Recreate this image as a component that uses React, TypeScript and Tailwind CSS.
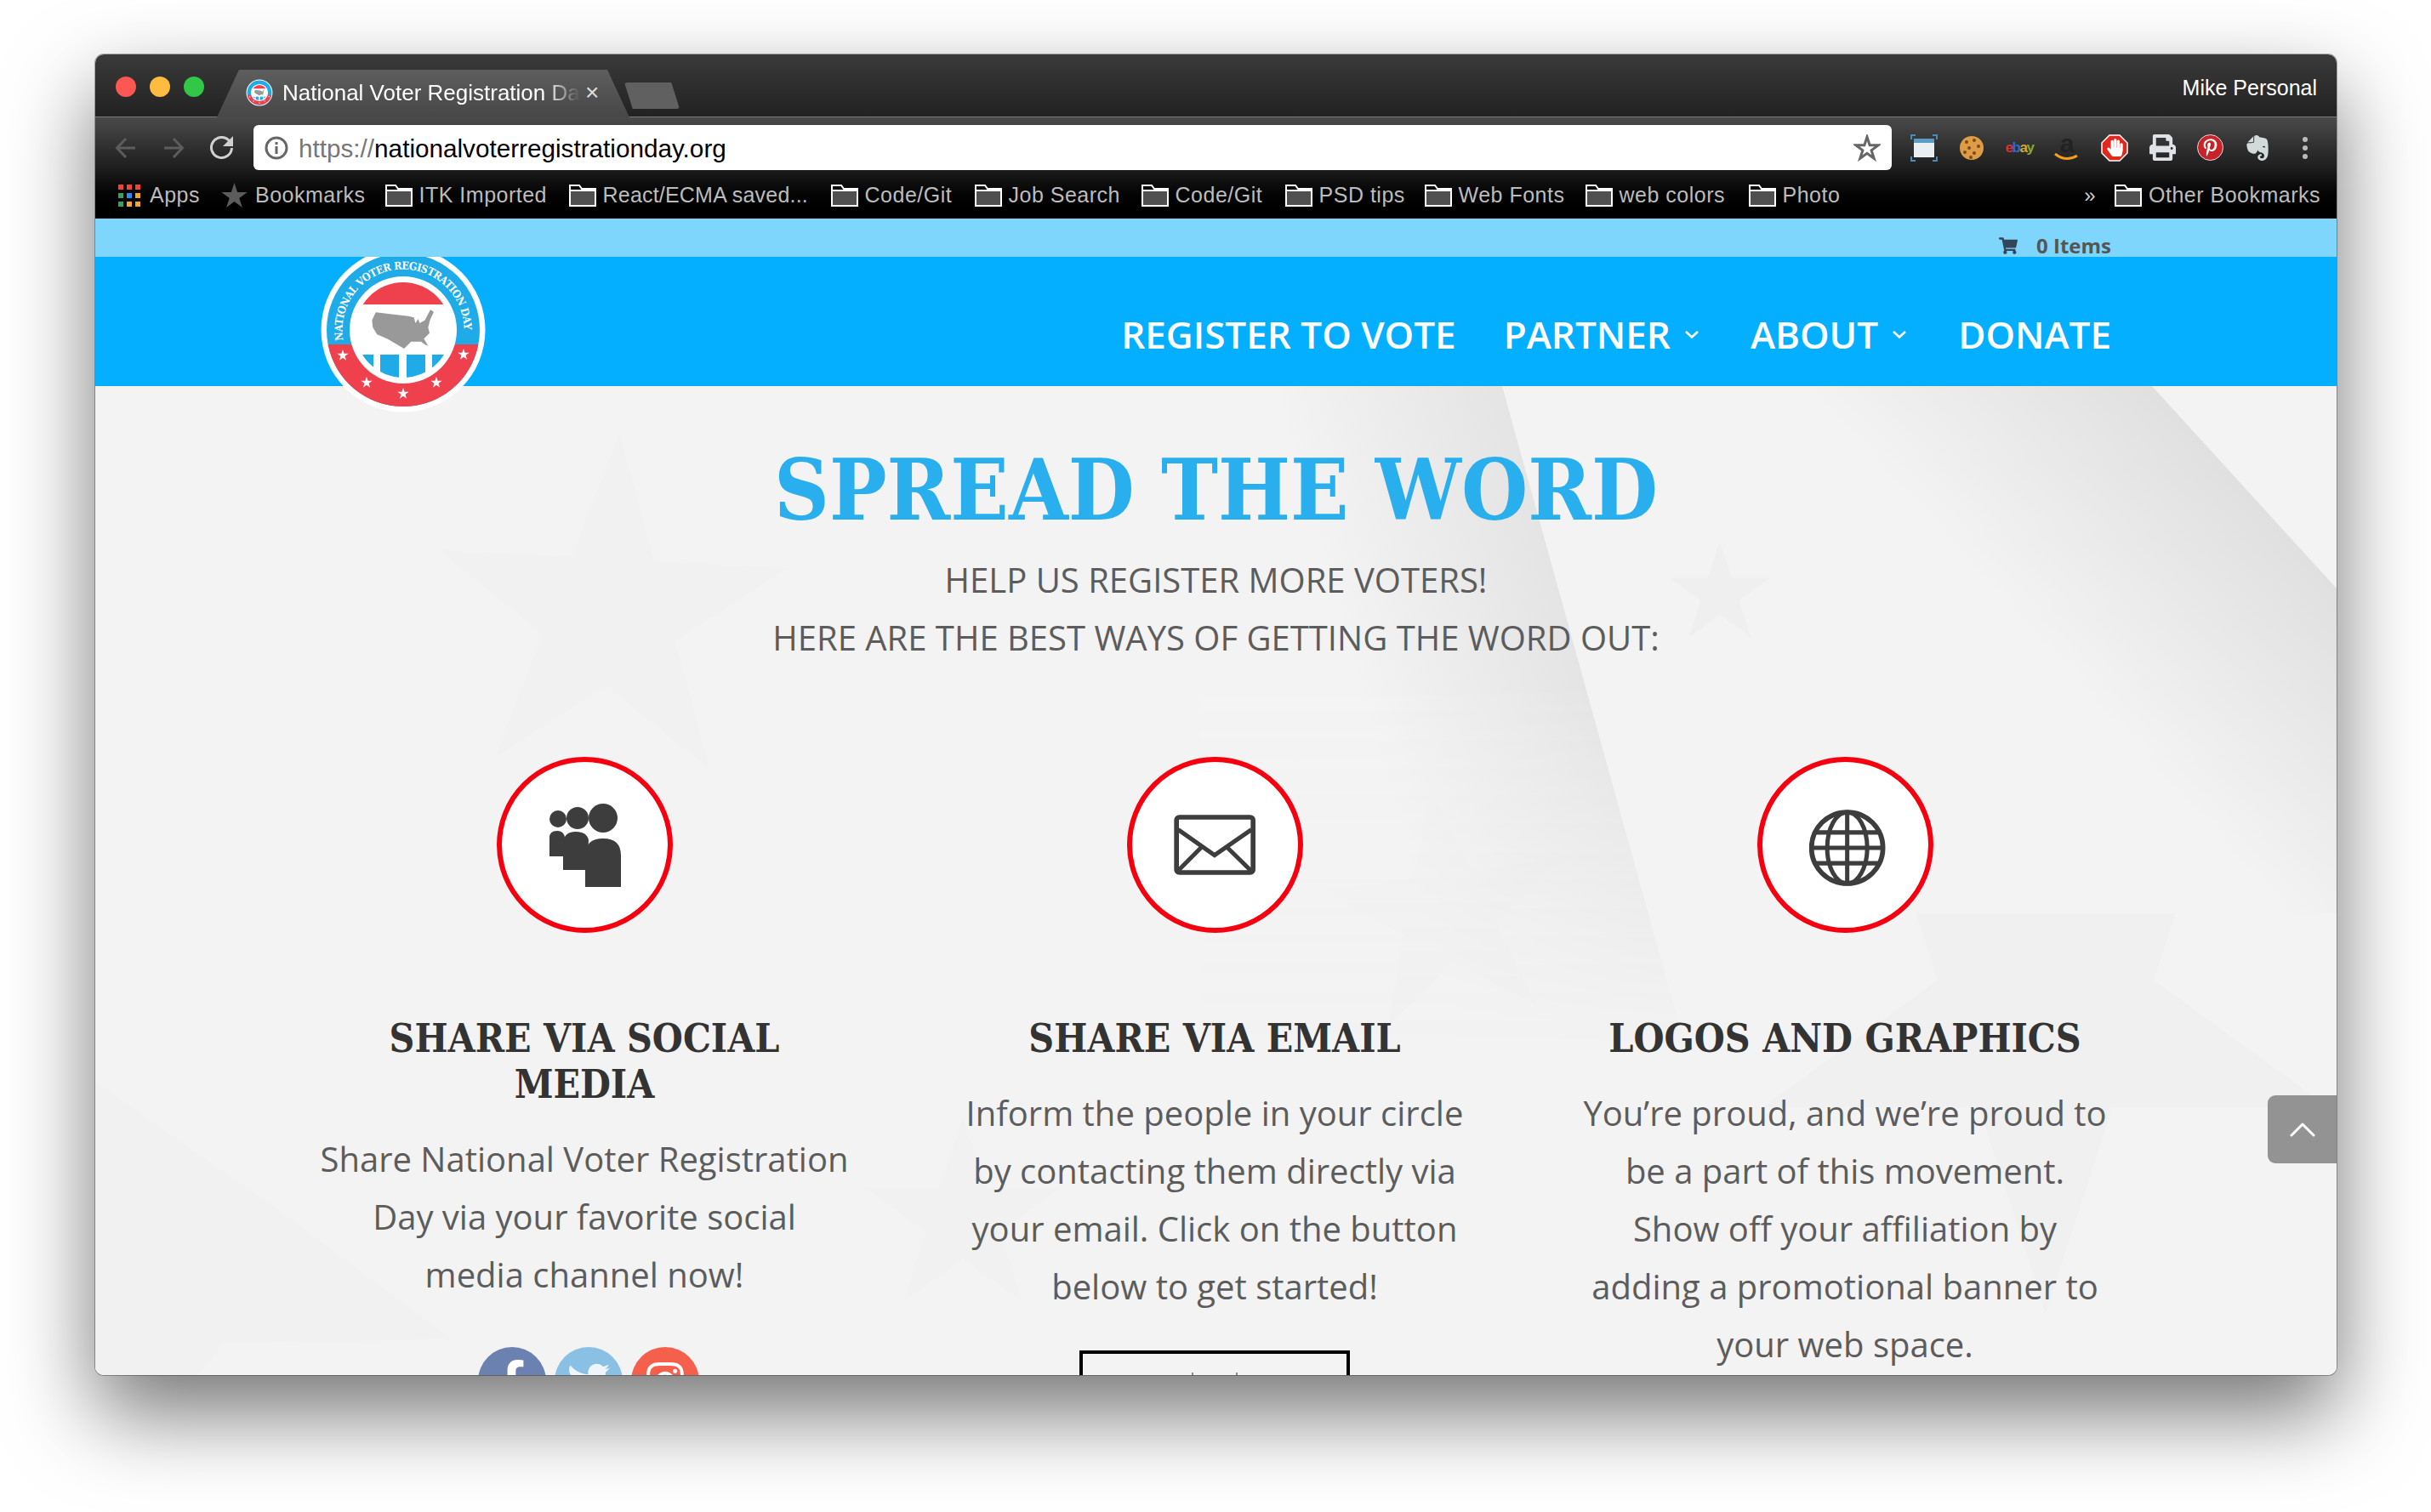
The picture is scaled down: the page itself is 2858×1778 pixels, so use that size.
import React from "react";
import { FaFacebookF, FaTwitter, FaInstagram, FaHandPaper, FaPrint, FaPinterestP, FaEvernote, FaShoppingCart } from "react-icons/fa";

const star = (cx: number, cy: number, R: number, rot = 0) => {
  const pts: string[] = [];
  for (let i = 0; i < 10; i++) {
    const r = i % 2 === 0 ? R : R * 0.382;
    const a = ((-90 + rot + i * 36) * Math.PI) / 180;
    pts.push(`${(cx + r * Math.cos(a)).toFixed(1)},${(cy + r * Math.sin(a)).toFixed(1)}`);
  }
  return pts.join(" ");
};

function Logo({ size, withText = true }: { size: number; withText?: boolean }) {
  return (
    <svg width={size} height={size} viewBox="0 0 200 200">
      <defs>
        <path id="logoArc" d="M 29.5 112 A 71.5 71.5 0 1 1 170.5 112" />
        <clipPath id="logoInner"><circle cx="100" cy="100" r="56" /></clipPath>
      </defs>
      <circle cx="100" cy="100" r="96.5" fill="#fff" />
      <circle cx="100" cy="100" r="90" fill="#1eabe8" />
      <path d="M 11.6 117 A 90 90 0 0 0 188.4 117 Z" fill="#ef404e" />
      <circle cx="100" cy="100" r="63" fill="#fff" />
      <g clipPath="url(#logoInner)">
        <rect x="40" y="40" width="120" height="30" fill="#ef404e" />
        <rect x="52" y="129" width="13" height="30" fill="#1eabe8" />
        <rect x="73" y="129" width="22" height="30" fill="#1eabe8" />
        <rect x="104" y="129" width="22" height="30" fill="#1eabe8" />
        <rect x="134" y="129" width="14" height="30" fill="#1eabe8" />
      </g>
      <g transform="translate(100,100) scale(0.3333) translate(-402,-354)">
        <polygon
          fill="#999"
          points="305,292 420,305 440,310 445,330 455,315 460,330 478,320 498,283 510,290 497,318 490,345 495,365 475,385 490,410 478,405 465,395 430,395 405,420 380,405 345,385 310,370 295,345 292,320"
        />
      </g>
      {withText && (
        <text fill="#fff" fontFamily="'DejaVu Serif', serif" fontWeight="700" fontSize="12.5" style={{ fontStretch: "condensed" }}>
          <textPath href="#logoArc" textLength="236" lengthAdjust="spacing">NATIONAL VOTER REGISTRATION DAY</textPath>
        </text>
      )}
      {[[29, 130], [57, 162], [100, 175], [139, 162], [171, 129]].map(([x, y]) => (
        <polygon key={x} points={star(x, y, 7)} fill="#fff" />
      ))}
    </svg>
  );
}

function Folder() {
  return (
    <svg width="32" height="26" viewBox="0 0 32 26" className="shrink-0">
      <path d="M1 8 H31 V25 H1 Z" fill="#505050" />
      <path d="M1 25 V1 H12 L15 5 H31 V25 Z M1 7 H31" fill="none" stroke="#fff" strokeWidth="2" />
    </svg>
  );
}

function Bm({ label, w, tight = false }: { label: string; w: number; tight?: boolean }) {
  return (
    <div className="flex items-center gap-[8px]">
      <Folder />
      <span className={tight ? "whitespace-nowrap tracking-[0.2px]" : "whitespace-nowrap"} style={{ width: w }}>{label}</span>
    </div>
  );
}

function AppsGrid() {
  const c = ["#f44336", "#f44336", "#f44336", "#3c9d60", "#2b8cf5", "#f5a52a", "#3c9d60", "#f5a52a", "#f5a52a"];
  return (
    <div className="grid grid-cols-3 gap-[4px] w-[26px] shrink-0">
      {c.map((x, i) => (
        <div key={i} className="w-[6px] h-[6px]" style={{ background: x }} />
      ))}
    </div>
  );
}

function Ext({ children }: { children: React.ReactNode }) {
  return <div className="w-[56px] h-[40px] flex items-center justify-center shrink-0">{children}</div>;
}

function Chev() {
  return (
    <svg width="18" height="11" viewBox="0 0 18 11" className="ml-[16px] mt-[2px]">
      <path d="M2 2 L9 8.5 L16 2" fill="none" stroke="#fff" strokeWidth="2.6" />
    </svg>
  );
}

function Circle({ children }: { children: React.ReactNode }) {
  return (
    <div className="w-[207px] h-[207px] rounded-full bg-white border-[6px] border-[#f5000f] flex items-center justify-center">
      {children}
    </div>
  );
}

const heading = "text-[46px] leading-[54px] font-bold text-[#333] text-center [font-family:'DejaVu_Serif',serif] [font-stretch:condensed]";
const body = "mt-[27px] text-[40px] leading-[68px] text-[#5c5c5c] text-center [font-family:'Open_Sans',sans-serif]";

function PageBackground() {
  return (
    <svg className="absolute inset-0 w-full h-full" viewBox="0 0 2635 1163" preserveAspectRatio="none">
      <defs>
        <linearGradient id="band" gradientUnits="userSpaceOnUse" x1="1760" y1="370" x2="1510" y2="440">
          <stop offset="0" stopColor="#e4e4e4" />
          <stop offset="1" stopColor="#f3f3f3" />
        </linearGradient>
        <linearGradient id="corner" gradientUnits="userSpaceOnUse" x1="2526" y1="119" x2="2304" y2="321">
          <stop offset="0" stopColor="#e0e0e0" />
          <stop offset="1" stopColor="#f3f3f3" />
        </linearGradient>
        <linearGradient id="fadeDown" x1="0" y1="0" x2="0" y2="1">
          <stop offset="0.45" stopColor="#fff" />
          <stop offset="1" stopColor="#000" />
        </linearGradient>
        <mask id="bandMask"><rect x="1300" y="0" width="800" height="780" fill="url(#fadeDown)" /></mask>
      </defs>
      <polygon points={star(605, 270, 215, 3)} fill="#f1f1f1" />
      <polygon points={star(2293, 740, 350, 180)} fill="#f0f0f0" />
      <polygon points={star(1590, 620, 150, -8)} fill="#f1f1f1" />
      <polygon points="1300,0 1654,0 1870,780 1300,780" fill="url(#band)" mask="url(#bandMask)" />
      <polygon points="2418,0 2635,238 2635,620 2000,620 2000,0" fill="url(#corner)" />
      <polygon points={star(1910, 245, 62)} fill="#efefef" />
      <polygon points="286,720 0,817 76,872 210,965 420,1121 151,1125 120,1163 0,1163 0,817" fill="#f1f1f1" />
      <polygon points={star(1020, 980, 120)} fill="#f1f1f1" />
    </svg>
  );
}

export default function App() {
  return (
    <div className="w-[2858px] h-[1778px] bg-white pl-[112px] pt-[64px] overflow-hidden">
      <div className="w-[2635px] h-[1553px] rounded-[10px] overflow-hidden flex flex-col shadow-[0_0_0_1px_rgba(0,0,0,0.3),0_44px_100px_0_rgba(0,0,0,0.55)] [font-family:'Liberation_Sans',Arial,sans-serif]">
        {/* title bar */}
        <div className="h-[74px] shrink-0 flex items-end bg-gradient-to-b from-[#3a3a3a] to-[#222] border-b border-[#7a7a7a] relative">
          <div className="self-start mt-[26px] ml-[24px] flex gap-[16px]">
            <div className="w-[24px] h-[24px] rounded-full bg-[#fc5753]" />
            <div className="w-[24px] h-[24px] rounded-full bg-[#fdbc40]" />
            <div className="w-[24px] h-[24px] rounded-full bg-[#33c748]" />
          </div>
          <div className="ml-[15px] -mb-px w-[485px] h-[56px] bg-gradient-to-b from-[#5e5e5e] to-[#474747] [clip-path:polygon(26px_0,459px_0,485px_100%,0_100%)] flex items-center pl-[34px] pb-[2px]">
            <Logo size={32} withText={false} />
            <span className="ml-[11px] w-[350px] overflow-hidden whitespace-nowrap text-[26px] text-white [mask-image:linear-gradient(to_right,black_88%,transparent)]">National Voter Registration Day</span>
            <span className="ml-[6px] text-[28px] text-[#ddd] leading-none">×</span>
          </div>
          <div className="-ml-[6px] mb-[9px] w-[65px] h-[31px] bg-[#606060] rounded-[4px] [clip-path:polygon(0_0,85%_0,100%_100%,15%_100%)]" />
          <span className="ml-auto self-start mt-[24px] mr-[23px] text-[25px] leading-[30px] text-white">Mike Personal</span>
        </div>
        {/* toolbar */}
        <div className="h-[119px] shrink-0 bg-gradient-to-b from-[#4a4a4a] via-[#1e1e1e] to-black flex flex-col pt-[9px]">
          <div className="flex items-center h-[53px] pl-[23px]">
            <svg width="26" height="26" viewBox="0 0 26 26"><path d="M24 13 H3 M13 2 L2.5 13 L13 24" fill="none" stroke="#5c5c5c" strokeWidth="3" /></svg>
            <svg width="26" height="26" viewBox="0 0 26 26" className="ml-[30px]"><path d="M2 13 H23 M13 2 L23.5 13 L13 24" fill="none" stroke="#5c5c5c" strokeWidth="3" /></svg>
            <svg width="27" height="27" viewBox="0 0 27 27" className="ml-[30px]">
              <path d="M22.5 5.5 A 12 12 0 1 0 25.5 14" fill="none" stroke="#d0d0d0" strokeWidth="3" />
              <path d="M27 0 V12 H15 Z" fill="#d0d0d0" />
            </svg>
            <div className="ml-[24px] w-[1926px] h-[53px] bg-white rounded-[6px] flex items-center pl-[13px] pr-[13px] text-[29.7px]">
              <svg width="28" height="28" viewBox="0 0 28 28" className="shrink-0">
                <circle cx="14" cy="14" r="12" fill="none" stroke="#666" strokeWidth="3" />
                <rect x="12.5" y="12" width="3" height="9" fill="#666" />
                <rect x="12.5" y="7" width="3" height="3" fill="#666" />
              </svg>
              <span className="ml-[12px] text-[#777] pt-[4px]">https://</span>
              <span className="text-black pt-[4px]">nationalvoterregistrationday.org</span>
              <svg width="32" height="32" viewBox="0 0 32 32" className="ml-auto shrink-0">
                <polygon points={star(16, 17, 14)} fill="none" stroke="#666" strokeWidth="3" />
              </svg>
            </div>
            <div className="ml-[10px] flex items-center">
              <Ext>
                <svg width="32" height="32" viewBox="0 0 32 32">
                  <path d="M1 6 V1 H6 M26 1 H31 V6 M31 26 V31 H26 M6 31 H1 V26" fill="none" stroke="#4a8cb8" strokeWidth="2" />
                  <rect x="4" y="5" width="24" height="22" fill="#e9eef3" />
                  <rect x="4" y="5" width="24" height="5" fill="#5b9bc8" />
                </svg>
              </Ext>
              <Ext>
                <svg width="30" height="32" viewBox="0 0 30 32">
                  <circle cx="15" cy="16" r="14" fill="#dd9c45" />
                  {[[9, 9], [18, 7], [23, 14], [12, 16], [7, 21], [18, 22], [14, 27]].map(([x, y]) => (
                    <circle key={`${x}-${y}`} cx={x} cy={y} r="2" fill="#7a4a17" />
                  ))}
                </svg>
              </Ext>
              <Ext>
                <span className="text-[17px] font-bold tracking-[-1.5px] leading-none">
                  <span className="text-[#d8342f]">e</span>
                  <span className="text-[#2d6cc4]">b</span>
                  <span className="text-[#d8a62a]">a</span>
                  <span className="text-[#84a82e]">y</span>
                </span>
              </Ext>
              <Ext>
                <svg width="32" height="36" viewBox="0 0 32 36">
                  <text x="16" y="23" textAnchor="middle" fontSize="30" fontWeight="700" fill="#222" fontFamily="'Liberation Sans', sans-serif">a</text>
                  <path d="M2 25 Q15 35 28 27" fill="none" stroke="#f59e1c" strokeWidth="3" />
                </svg>
              </Ext>
              <Ext>
                <div className="relative w-[32px] h-[32px] flex items-center justify-center">
                  <svg width="32" height="32" viewBox="0 0 32 32" className="absolute inset-0">
                    <polygon points="10,1 22,1 31,10 31,22 22,31 10,31 1,22 1,10" fill="#e0281f" stroke="#fff" strokeWidth="1.5" />
                  </svg>
                  <FaHandPaper className="relative text-white" size={21} />
                </div>
              </Ext>
              <Ext><FaPrint className="text-[#dfe3e8]" size={31} /></Ext>
              <Ext>
                <div className="w-[31px] h-[31px] rounded-full bg-[#c92228] border border-[#ddd] flex items-center justify-center">
                  <FaPinterestP className="text-white" size={21} />
                </div>
              </Ext>
              <Ext><FaEvernote className="text-[#d2dada]" size={34} /></Ext>
              <Ext>
                <div className="flex flex-col gap-[4px]">
                  <div className="w-[6px] h-[6px] rounded-full bg-[#bbb]" />
                  <div className="w-[6px] h-[6px] rounded-full bg-[#bbb]" />
                  <div className="w-[6px] h-[6px] rounded-full bg-[#bbb]" />
                </div>
              </Ext>
            </div>
          </div>
          <div className="mt-[5px] h-[50px] flex items-center pl-[27px] pr-[19px] text-[25px] text-[#bcbcbc] tracking-[0.5px]">
            <AppsGrid />
            <span className="ml-[11px]">Apps</span>
            <svg width="31" height="30" viewBox="0 0 31 30" className="ml-[25px]"><polygon points={star(15.5, 16, 16)} fill="#5c5c5c" /></svg>
            <span className="ml-[9px] mr-[23px]">Bookmarks</span>
            <div className="flex items-center gap-[26px]">
              <Bm label="ITK Imported" w={150} />
              <Bm label="React/ECMA saved..." w={242} tight />
              <Bm label="Code/Git" w={103} />
              <Bm label="Job Search" w={130} />
              <Bm label="Code/Git" w={103} />
              <Bm label="PSD tips" w={98} />
              <Bm label="Web Fonts" w={123} />
              <Bm label="web colors" w={126} />
              <Bm label="Photo" w={66} />
            </div>
            <span className="ml-auto mr-[22px] text-[24px] text-[#ccc]">»</span>
            <Bm label="Other Bookmarks" w={202} />
          </div>
        </div>
        {/* site */}
        <div className="relative flex-1 flex flex-col overflow-hidden [font-family:'Open_Sans',sans-serif]">
          <div className="relative z-20 h-[45px] shrink-0 bg-[#7fd6fd] flex items-center justify-end pr-[265px] pt-[18px]">
            <FaShoppingCart className="text-[#33475a]" size={22} />
            <span className="ml-[22px] text-[24px] font-bold text-[#555]">0 Items</span>
          </div>
          <div className="relative z-0 h-[152px] shrink-0 bg-[#05afff] flex items-center justify-end pr-[265px] pt-[29px] text-[44px] font-semibold text-white">
            <span>REGISTER TO VOTE</span>
            <span className="ml-[56px]">PARTNER</span>
            <Chev />
            <span className="ml-[60px]">ABOUT</span>
            <Chev />
            <span className="ml-[60px]">DONATE</span>
          </div>
          <div className="absolute z-10 left-[262px] top-[31px]">
            <Logo size={200} />
          </div>
          <main className="relative flex-1 overflow-hidden bg-[#f3f3f3]">
            <PageBackground />
            <div className="relative flex flex-col">
              <h1 className="mt-[62px] text-center text-[100px] leading-[120px] font-bold text-[#29aeee] [font-family:'DejaVu_Serif',serif] [font-stretch:condensed]">SPREAD THE WORD</h1>
              <p className="mt-[12px] text-center text-[40px] leading-[68px] text-[#5c5c5c]">HELP US REGISTER MORE VOTERS!<br />HERE ARE THE BEST WAYS OF GETTING THE WORD OUT:</p>
              <div className="mt-[106px] pl-[245px] flex gap-[81px] items-start">
                <section className="w-[660px] flex flex-col items-center">
                  <Circle>
                    <svg width="84" height="98" viewBox="646 944 84 98" fill="#3d3d3d" className="translate-x-[1px]">
                      <circle cx="656" cy="962" r="10" />
                      <circle cx="679" cy="961" r="13" />
                      <circle cx="709" cy="961" r="17" />
                      <path d="M646 1006 V984 Q646 976 655 976 Q663 976 664 984 L664 1006 Z" />
                      <path d="M662 1022 V992 Q662 977 677 977 Q690 977 692 987 L690 1022 Z" />
                      <path d="M688 1042 V1005 Q688 985 709 985 Q730 985 730 1005 V1042 Z" />
                    </svg>
                  </Circle>
                  <h2 className={`mt-[97px] ${heading}`}>SHARE VIA SOCIAL<br />MEDIA</h2>
                  <p className={body}>Share National Voter Registration<br />Day via your favorite social<br />media channel now!</p>
                  <div className="mt-[51px] ml-[10px] flex gap-[10px]">
                    <div className="w-[80px] h-[80px] rounded-full bg-[#6b82b0] flex items-center justify-center"><FaFacebookF className="text-white" size={50} /></div>
                    <div className="w-[80px] h-[80px] rounded-full bg-[#89c0e3] flex items-center justify-center"><FaTwitter className="text-[#eef6fb]" size={50} /></div>
                    <div className="w-[80px] h-[80px] rounded-full bg-[#f4604c] flex items-center justify-center"><FaInstagram className="text-white" size={50} /></div>
                  </div>
                </section>
                <section className="w-[660px] flex flex-col items-center">
                  <Circle>
                    <svg width="96" height="71" viewBox="63 85 287 213">
                      <rect x="72" y="94" width="270" height="195" rx="10" fill="none" stroke="#3d3d3d" strokeWidth="17" />
                      <path d="M78 138 L206 228 L336 138 M78 282 L160 200 M250 200 L334 282" fill="none" stroke="#3d3d3d" strokeWidth="15" />
                    </svg>
                  </Circle>
                  <h2 className={`mt-[97px] ${heading}`}>SHARE VIA EMAIL</h2>
                  <p className={body}>Inform the people in your circle<br />by contacting them directly via<br />your email. Click on the button<br />below to get started!</p>
                  <div className="mt-[41px] w-[318px] h-[90px] border-[4px] border-black flex justify-between px-[128px] pt-[22px]">
                    <div className="w-[2px] h-[4px] bg-[#888]" />
                    <div className="w-[2px] h-[4px] bg-[#888]" />
                  </div>
                </section>
                <section className="w-[660px] flex flex-col items-center">
                  <Circle>
                    <svg width="90" height="90" viewBox="55 50 268 268" className="translate-x-[3px] translate-y-[3px]">
                      <g fill="none" stroke="#3d3d3d">
                        <circle cx="188" cy="184" r="125" strokeWidth="17" />
                        <ellipse cx="188" cy="184" rx="70" ry="125" strokeWidth="15" />
                        <path d="M188 59 V309 M78 130 H298 M62 184 H314 M78 238 H298" strokeWidth="15" />
                      </g>
                    </svg>
                  </Circle>
                  <h2 className={`mt-[97px] ${heading}`}>LOGOS AND GRAPHICS</h2>
                  <p className={body}>You’re proud, and we’re proud to<br />be a part of this movement.<br />Show off your affiliation by<br />adding a promotional banner to<br />your web space.</p>
                </section>
              </div>
            </div>
            <button className="absolute right-0 top-[834px] w-[81px] h-[80px] bg-[#939393] rounded-l-[9px] flex items-center justify-center">
              <svg width="30" height="18" viewBox="0 0 30 18"><path d="M2 16 L15 3 L28 16" fill="none" stroke="#fff" strokeWidth="3" strokeLinecap="round" strokeLinejoin="round" /></svg>
            </button>
          </main>
        </div>
      </div>
    </div>
  );
}
